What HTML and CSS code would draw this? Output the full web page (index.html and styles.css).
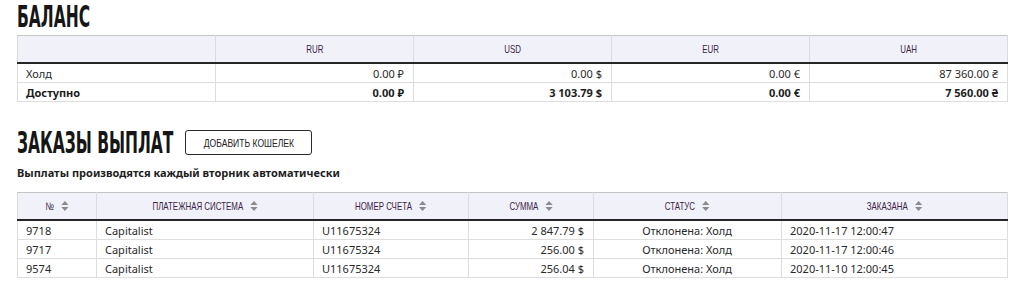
FILE: index.html
```html
<!DOCTYPE html>
<html lang="ru">
<head>
  <meta charset="UTF-8" />
  <title>Баланс</title>
  <link rel="stylesheet" href="styles.css">
</head>
<body>
  <div class="page">
    <h1 class="title"><span>Баланс</span></h1>
    <table class="grid balance">
      <thead>
        <tr>
          <th></th>
          <th><span class="cond">RUR</span></th>
          <th><span class="cond">USD</span></th>
          <th><span class="cond">EUR</span></th>
          <th><span class="cond">UAH</span></th>
        </tr>
      </thead>
      <tbody>
        <tr>
          <td>Холд</td>
          <td class="num">0.00 ₽</td>
          <td class="num">0.00 $</td>
          <td class="num">0.00 €</td>
          <td class="num">87 360.00 ₴</td>
        </tr>
        <tr class="strong">
          <td>Доступно</td>
          <td class="num">0.00 ₽</td>
          <td class="num">3 103.79 $</td>
          <td class="num">0.00 €</td>
          <td class="num">7 560.00 ₴</td>
        </tr>
      </tbody>
    </table>

    <div class="head-row">
      <h1 class="title wide"><span>Заказы выплат</span></h1>
      <button class="btn"><span class="cond">Добавить кошелек</span></button>
    </div>
    <p class="note">Выплаты производятся каждый вторник автоматически</p>

    <table class="grid orders">
      <colgroup>
        <col style="width:79px">
        <col style="width:217px">
        <col style="width:155px">
        <col style="width:125px">
        <col style="width:188px">
        <col>
      </colgroup>
      <thead>
        <tr>
          <th><span class="cond">№ <i class="sort"></i></span></th>
          <th><span class="cond">Платежная система <i class="sort"></i></span></th>
          <th><span class="cond">Номер счета <i class="sort"></i></span></th>
          <th><span class="cond">Сумма <i class="sort"></i></span></th>
          <th><span class="cond">Статус <i class="sort"></i></span></th>
          <th><span class="cond">Заказана <i class="sort"></i></span></th>
        </tr>
      </thead>
      <tbody>
        <tr>
          <td>9718</td>
          <td>Capitalist</td>
          <td>U11675324</td>
          <td class="num">2 847.79 $</td>
          <td class="center">Отклонена: Холд</td>
          <td>2020-11-17 12:00:47</td>
        </tr>
        <tr>
          <td>9717</td>
          <td>Capitalist</td>
          <td>U11675324</td>
          <td class="num">256.00 $</td>
          <td class="center">Отклонена: Холд</td>
          <td>2020-11-17 12:00:46</td>
        </tr>
        <tr>
          <td>9574</td>
          <td>Capitalist</td>
          <td>U11675324</td>
          <td class="num">256.04 $</td>
          <td class="center">Отклонена: Холд</td>
          <td>2020-11-10 12:00:45</td>
        </tr>
      </tbody>
    </table>
  </div>
</body>
</html>
```

FILE: styles.css
```css
body {
  margin: 0;
  padding: 0;
  background: #ffffff;
  color: #2a2a2a;
  font-family: "Noto Sans", "DejaVu Sans", sans-serif;
  font-size: 11px;
}
.page {
  padding: 0 18px 0 17px;
}
.title {
  margin: 0;
  height: 35px;
  font-family: "DejaVu Sans", sans-serif;
  font-size: 31px;
  font-weight: bold;
  line-height: 32px;
  text-transform: uppercase;
  color: #161616;
  white-space: nowrap;
}
.title span {
  display: inline-block;
  transform: scaleX(0.5);
  transform-origin: left center;
}
.title.wide {
  width: 156px;
  height: 25px;
  line-height: 25px;
}
.cond {
  display: inline-block;
  transform: scaleX(0.72);
  transform-origin: center center;
  white-space: nowrap;
}
.grid {
  width: 100%;
  border-collapse: collapse;
  table-layout: fixed;
}
.grid th {
  height: 26px;
  padding: 0 4px;
  background: #f1f1fa;
  border: 1px solid #dcdcdc;
  border-top-color: #c4c4c4;
  border-bottom: 2px solid #262626;
  font-family: "Liberation Sans", sans-serif;
  font-weight: normal;
  font-size: 11px;
  text-transform: uppercase;
  color: #3b1f45;
  text-align: center;
  white-space: nowrap;
}
.grid td {
  height: 18px;
  padding: 0 9px 0 8px;
  border: 1px solid #dedede;
  white-space: nowrap;
}
.grid .num {
  text-align: right;
}
.grid .center {
  text-align: center;
}
.strong td {
  font-weight: bold;
  color: #1c1c1c;
}
.head-row {
  display: flex;
  align-items: center;
  gap: 12px;
  margin-top: 28px;
  height: 25px;
}
.btn {
  height: 25px;
  width: 127px;
  padding: 0;
  background: #ffffff;
  border: 1px solid #2a2a2a;
  border-radius: 3px;
  font-family: "Liberation Sans", sans-serif;
  font-size: 11px;
  text-transform: uppercase;
  color: #222222;
  cursor: pointer;
}
.btn .cond {
  transform: scaleX(0.78);
}
.note {
  margin: 10px 0 12px;
  font-weight: bold;
  font-size: 11px;
  line-height: 15px;
  color: #1e1e1e;
}
.orders th {
  height: 26px;
}
.orders td {
  height: 18px;
}
.sort {
  display: inline-block;
  width: 10px;
  height: 10px;
  margin-left: 7px;
  vertical-align: -1px;
  position: relative;
}
.sort::before,
.sort::after {
  content: "";
  position: absolute;
  left: 0;
  border-left: 5px solid transparent;
  border-right: 5px solid transparent;
}
.sort::before {
  top: 0;
  border-bottom: 4px solid #8a8a8a;
}
.sort::after {
  bottom: 0;
  border-top: 4px solid #8a8a8a;
}
```
